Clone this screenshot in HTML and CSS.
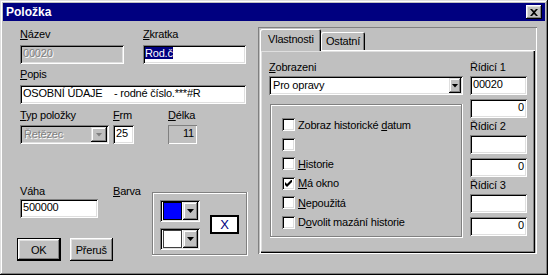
FILE: index.html
```html
<!DOCTYPE html>
<html lang="cs">
<head>
    <meta charset="UTF-8">
    <meta name="viewport" content="width=device-width, initial-scale=1.0">
    <title>Položka</title>
    <link rel="stylesheet" href="styles.css">
</head>
<body>
    <div class="window">
        <div class="titlebar">
            <span class="title">Položka</span>
            <span class="close-btn">
                <svg width="8" height="7" viewBox="0 0 8 7"><path d="M0 0h2l2 2 2-2h2L5 3.5 8 7H6L4 5 2 7H0l3-3.5z" fill="#000"/></svg>
            </span>
        </div>

        <div class="client">
            <!-- Left part of the dialog -->
            <div class="left-col">
                <div class="row row-top">
                    <div class="field w-nazev">
                        <label><u>N</u>ázev</label>
                        <div class="edit disabled">00020</div>
                    </div>
                    <div class="field w-zkratka">
                        <label><u>Z</u>kratka</label>
                        <div class="edit"><span class="selected">Rod.č</span></div>
                    </div>
                </div>

                <div class="row row-popis">
                    <div class="field w-popis">
                        <label><u>P</u>opis</label>
                        <div class="edit">OSOBNÍ ÚDAJE    - rodné číslo.***#R</div>
                    </div>
                </div>

                <div class="row row-typ">
                    <div class="field w-typ">
                        <label><u>T</u>yp položky</label>
                        <div class="combo disabled">
                            <span class="combo-text">Řetězec</span>
                            <span class="drop-btn"><i class="arrow"></i></span>
                        </div>
                    </div>
                    <div class="field w-frm">
                        <label><u>F</u>rm</label>
                        <div class="edit">25</div>
                    </div>
                    <div class="field w-delka">
                        <label><u>D</u>élka</label>
                        <div class="static">11</div>
                    </div>
                </div>

                <div class="row row-bottom">
                    <div class="col-vaha">
                        <label>Váha</label>
                        <div class="edit w-vaha">500000</div>
                        <div class="buttons">
                            <button class="btn default">OK</button>
                            <button class="btn">Přeruš</button>
                        </div>
                    </div>
                    <label class="barva-label"><u>B</u>arva</label>
                    <div class="color-group">
                        <div class="color-combos">
                            <div class="color-combo">
                                <span class="swatch blue"></span>
                                <span class="drop-btn"><i class="arrow"></i></span>
                            </div>
                            <div class="color-combo">
                                <span class="swatch white"></span>
                                <span class="drop-btn"><i class="arrow"></i></span>
                            </div>
                        </div>
                        <div class="color-sample">X</div>
                    </div>
                </div>
            </div>

            <!-- Right part: tab control -->
            <div class="tab-frame">
                <div class="tabs">
                    <div class="tab active">Vlastnosti</div>
                    <div class="tab">Ostatní</div>
                </div>
                <div class="tab-panel">
                    <div class="panel-main">
                        <label><u>Z</u>obrazeni</label>
                        <div class="combo">
                            <span class="combo-text">Pro opravy</span>
                            <span class="drop-btn narrow"><i class="arrow"></i></span>
                        </div>
                        <div class="check-group">
                            <div class="check-row"><span class="checkbox"></span><span>Zobraz historické <u>d</u>atum</span></div>
                            <div class="check-row"><span class="checkbox"></span><span></span></div>
                            <div class="check-row"><span class="checkbox"></span><span><u>H</u>istorie</span></div>
                            <div class="check-row">
                                <span class="checkbox">
                                    <svg width="7" height="7" viewBox="0 0 7 7"><polygon points="0,2 2,4 6,0 7,0 7,2 2,7 0,5" fill="#000"/></svg>
                                </span>
                                <span><u>M</u>á okno</span>
                            </div>
                            <div class="check-row"><span class="checkbox"></span><span><u>N</u>epoužitá</span></div>
                            <div class="check-row"><span class="checkbox"></span><span>D<u>o</u>volit mazání historie</span></div>
                        </div>
                    </div>
                    <div class="panel-side">
                        <div class="ridici">
                            <label>Řídicí 1</label>
                            <div class="edit">00020</div>
                            <div class="edit right">0</div>
                        </div>
                        <div class="ridici">
                            <label>Řídicí 2</label>
                            <div class="edit"></div>
                            <div class="edit right">0</div>
                        </div>
                        <div class="ridici">
                            <label>Řídicí 3</label>
                            <div class="edit"></div>
                            <div class="edit right">0</div>
                        </div>
                    </div>
                </div>
            </div>
        </div>
    </div>
</body>
</html>
```

FILE: styles.css
```css
* {
    box-sizing: border-box;
}
body {
    margin: 0;
    background-color: #c0c0c0;
    font-family: "Liberation Sans", Arial, sans-serif;
    font-size: 11px;
    letter-spacing: -0.2px;
    color: #000;
}
label {
    display: block;
    height: 13px;
    line-height: 13px;
    white-space: nowrap;
}
u {
    text-decoration: underline;
    text-underline-offset: 1px;
}

/* Window frame */
.window {
    width: 548px;
    height: 275px;
    padding: 3px;
    background-color: #c0c0c0;
    box-shadow: inset -1px -1px #000, inset 1px 1px #dfdfdf, inset -2px -2px #808080, inset 2px 2px #fff;
}
.titlebar {
    height: 18px;
    background-color: #000080;
    display: flex;
    align-items: center;
    justify-content: space-between;
    padding: 0 3px 0 3px;
}
.title {
    color: #fff;
    font-weight: bold;
    font-size: 12px;
    letter-spacing: 0;
}
.close-btn {
    width: 16px;
    height: 14px;
    background-color: #c0c0c0;
    display: flex;
    align-items: center;
    justify-content: center;
    box-shadow: inset -1px -1px #000, inset 1px 1px #fff, inset -2px -2px #808080, inset 2px 2px #dfdfdf;
}
.close-btn svg {
    display: block;
}

.client {
    display: flex;
    padding: 6px 0 0 17px;
}

/* Shared controls */
.edit {
    height: 19px;
    background-color: #fff;
    padding: 1px 3px 0 3px;
    line-height: 15px;
    white-space: pre;
    overflow: hidden;
    box-shadow: inset 1px 1px #808080, inset -1px -1px #fff, inset 2px 2px #000, inset -2px -2px #dfdfdf;
}
.edit.right {
    text-align: right;
}
.edit.disabled {
    background-color: #c0c0c0;
    color: #808080;
    text-shadow: 1px 1px 0 #fff;
}
.selected {
    background-color: #000080;
    color: #fff;
    margin-left: -1px;
}
.static {
    height: 19px;
    line-height: 15px;
    padding: 1px 3px 0 0;
    text-align: right;
    box-shadow: inset 1px 1px #808080, inset -1px -1px #fff;
}
.combo {
    height: 19px;
    display: flex;
    align-items: stretch;
    padding: 2px;
    background-color: #fff;
    box-shadow: inset 1px 1px #808080, inset -1px -1px #fff, inset 2px 2px #000, inset -2px -2px #dfdfdf;
}
.combo-text {
    flex: 1;
    line-height: 14px;
    padding-left: 2px;
}
.combo.disabled {
    background-color: #c0c0c0;
}
.combo.disabled .combo-text {
    color: #808080;
    text-shadow: 1px 1px 0 #fff;
}
.drop-btn {
    width: 16px;
    background-color: #c0c0c0;
    display: flex;
    align-items: center;
    justify-content: center;
    box-shadow: inset -1px -1px #000, inset 1px 1px #dfdfdf, inset -2px -2px #808080, inset 2px 2px #fff;
}
.drop-btn.narrow {
    width: 12px;
}
.arrow {
    display: block;
    width: 7px;
    height: 4px;
    background-color: #000;
    clip-path: polygon(0 0, 100% 0, 50% 100%);
}
.combo.disabled .arrow {
    background-color: #808080;
}
.btn {
    width: 54px;
    height: 23px;
    padding: 0;
    border: none;
    background-color: #c0c0c0;
    font-family: inherit;
    font-size: 11px;
    letter-spacing: -0.2px;
    color: #000;
    box-shadow: inset -1px -1px #000, inset 1px 1px #fff, inset -2px -2px #808080, inset 2px 2px #dfdfdf;
}
.btn.default {
    box-shadow: inset 0 0 0 1px #000, inset -2px -2px #000, inset 2px 2px #fff, inset -3px -3px #808080, inset 3px 3px #dfdfdf;
}

/* Left column */
.left-col {
    width: 238px;
    padding-top: 1px;
}
.row {
    display: flex;
}
.field label {
    margin-bottom: 4px;
}
.row-top {
    gap: 19px;
}
.w-nazev {
    width: 104px;
}
.w-zkratka {
    width: 103px;
}
.row-popis {
    margin-top: 4px;
}
.w-popis {
    width: 226px;
}
.row-typ {
    margin-top: 5px;
}
.row-typ .field label {
    margin-bottom: 3px;
}
.w-typ {
    width: 89px;
}
.w-frm {
    width: 21px;
    margin-left: 4px;
}
.w-delka {
    width: 29px;
    margin-left: 34px;
}
.row-bottom {
    margin-top: 41px;
}
.col-vaha {
    width: 93px;
}
.col-vaha label {
    margin-bottom: 1px;
}
.w-vaha {
    width: 78px;
}
.buttons {
    display: flex;
    gap: 9px;
    margin-top: 20px;
    margin-left: -3px;
}
.barva-label {
    width: 39px;
}
.color-group {
    width: 96px;
    height: 64px;
    margin-top: 7px;
    padding: 8px 0 0 8px;
    display: flex;
    box-shadow: inset -1px -1px #fff, inset 1px 1px #808080, inset -2px -2px #808080, inset 2px 2px #fff;
}
.color-combos {
    display: flex;
    flex-direction: column;
    gap: 6px;
}
.color-combo {
    width: 40px;
    height: 22px;
    padding: 2px;
    display: flex;
    background-color: #fff;
    box-shadow: inset 1px 1px #808080, inset -1px -1px #fff, inset 2px 2px #000, inset -2px -2px #dfdfdf;
}
.swatch {
    width: 19px;
    margin: 0 1px;
    border: 1px solid #000;
}
.swatch.blue {
    background-color: #0000ff;
}
.swatch.white {
    background-color: #fff;
    border-color: #404040;
}
.color-combo .drop-btn {
    width: 15px;
}
.color-sample {
    width: 29px;
    height: 19px;
    margin: 15px 0 0 10px;
    border: 2px solid #000;
    background-color: #fff;
    color: #000080;
    font-size: 13px;
    line-height: 15px;
    letter-spacing: 0;
    text-align: center;
}

/* Right column: tab control */
.tab-frame {
    width: 279px;
    height: 227px;
    padding: 1px;
    box-shadow: inset 1px 1px #808080, inset -1px -1px #fff;
}
.tabs {
    height: 22px;
    display: flex;
    align-items: flex-end;
    padding-left: 1px;
}
.tab {
    height: 18px;
    padding: 3px 5px 0 5px;
    line-height: 13px;
    box-shadow: inset 1px 1px #fff, inset -1px 0 #000, inset -2px 0 #808080;
    border-radius: 2px 2px 0 0;
}
.tab.active {
    height: 22px;
    width: 61px;
    padding: 4px 0 0 8px;
    margin-bottom: -1px;
    position: relative;
    z-index: 1;
    background-color: #c0c0c0;
}
.tab-panel {
    width: 275px;
    height: 203px;
    margin-left: 1px;
    padding: 11px 8px 0 9px;
    display: flex;
    gap: 7px;
    box-shadow: inset 1px 1px #fff, inset -1px -1px #000, inset -2px -2px #808080, inset 2px 2px #dfdfdf;
}
.panel-main {
    width: 194px;
}
.panel-main > label {
    margin-bottom: 2px;
}
.check-group {
    width: 193px;
    height: 134px;
    margin: 9px 0 0 1px;
    padding: 11px 0 0 12px;
    box-shadow: inset -1px -1px #fff, inset 1px 1px #808080, inset -2px -2px #808080, inset 2px 2px #fff;
}
.check-row {
    height: 19.5px;
    display: flex;
    align-items: center;
    gap: 3px;
    white-space: nowrap;
}
.checkbox {
    width: 13px;
    height: 13px;
    flex: none;
    background-color: #fff;
    display: flex;
    align-items: center;
    justify-content: center;
    box-shadow: inset 1px 1px #808080, inset -1px -1px #fff, inset 2px 2px #000, inset -2px -2px #dfdfdf;
}
.checkbox svg {
    display: block;
}
.panel-side {
    width: 57px;
}
.ridici {
    margin-bottom: 2px;
}
.ridici label {
    margin-bottom: 2px;
}
.ridici .edit + .edit {
    margin-top: 4px;
}
```
